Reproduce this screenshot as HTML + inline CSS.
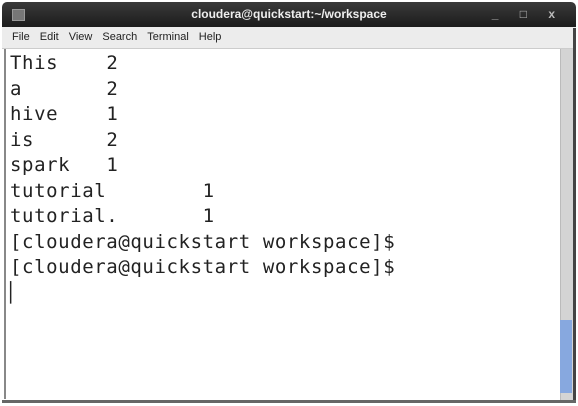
<html><head><style>
body{margin:0;width:578px;height:406px;background:#fff;overflow:hidden;font-family:"Liberation Sans",sans-serif}
.title{position:absolute;left:2px;top:2px;width:574px;height:25px;background:linear-gradient(#3a3a3a,#1c1c1c);border-radius:5px 5px 0 0;color:#eee;font-weight:bold;font-size:12px;text-align:center;line-height:25px}
.icon{position:absolute;left:10px;top:7px;width:11px;height:10px;background:#777;border:1px solid #999}
.ctl{position:absolute;right:12px;top:0;font-size:12px;color:#bbb;letter-spacing:9px}
.menu{position:absolute;left:2px;top:27px;width:574px;height:21px;background:#ececec;border-bottom:1px solid #ccc;font-size:11px;color:#222;line-height:21px}
.menu span{margin-left:10px;margin-right:0}
.term{position:absolute;left:4px;top:49px;width:554px;height:350px;border-left:2px solid #888;}
pre{margin:0;position:absolute;left:4px;top:2px;font-family:"DejaVu Sans Mono","Liberation Mono",monospace;font-size:19px;line-height:25.5px;color:#222;letter-spacing:0.6px;tab-size:8}
.sb{position:absolute;left:560px;top:49px;width:12px;height:351px;background:#d4d4d4;border-left:1px solid #bbb}
.thumb{position:absolute;left:560px;top:320px;width:12px;height:73px;background:#87a8df}
.rb{position:absolute;left:573px;top:28px;width:3px;height:374px;background:#444}
.bb{position:absolute;left:2px;top:400px;width:574px;height:3px;background:#666}
</style></head><body>
<div class="title"><div class="icon"></div>cloudera@quickstart:~/workspace<div class="ctl">_ □ x</div></div>
<div class="menu"><span>File</span><span>Edit</span><span>View</span><span>Search</span><span>Terminal</span><span>Help</span></div>
<div class="term"><pre>This	2
a	2
hive	1
is	2
spark	1
tutorial	1
tutorial.	1
[cloudera@quickstart workspace]$
[cloudera@quickstart workspace]$
▏</pre></div>
<div class="sb"></div><div class="thumb"></div><div class="rb"></div><div class="bb"></div>
</body></html>
